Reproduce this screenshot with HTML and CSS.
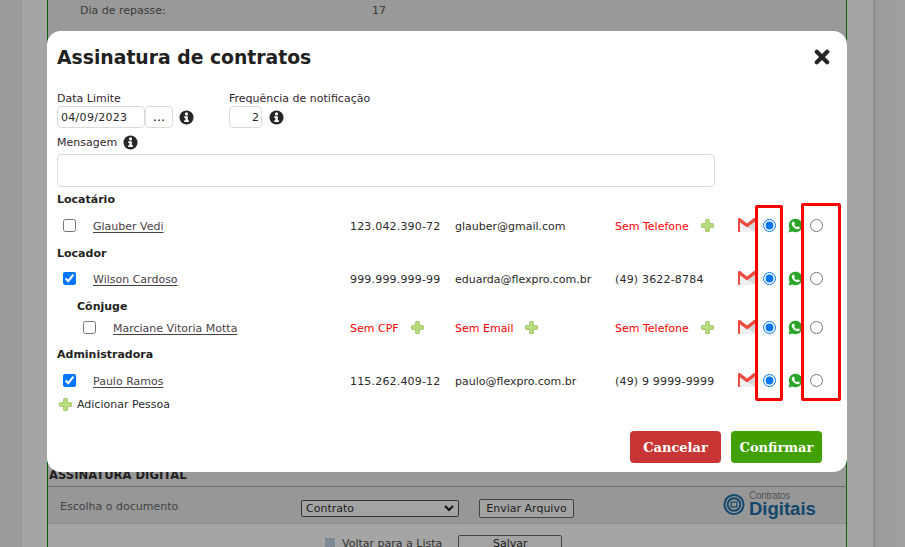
FILE: index.html
```html
<!DOCTYPE html>
<html lang="pt-BR">
<head>
<meta charset="utf-8">
<title>Assinatura de contratos</title>
<link rel="stylesheet" href="styles.css">
</head>
<body>
<svg class="defs" width="0" height="0" aria-hidden="true">
  <defs>
    <symbol id="i-info" viewBox="0 0 16 16">
      <circle cx="8" cy="8" r="7.5" fill="#262626"/>
      <circle cx="8" cy="4.2" r="1.7" fill="#fff"/>
      <path d="M5.6 6.6H9.4V11H10.6V12.8H5.6V11H6.8V8.4H5.6Z" fill="#fff"/>
    </symbol>
    <symbol id="i-plus" viewBox="0 0 14 14">
      <path d="M5 1.2Q5 .5 5.7 .5H8.3Q9 .5 9 1.2V5H12.8Q13.5 5 13.5 5.7V8.3Q13.5 9 12.8 9H9V12.8Q9 13.5 8.3 13.5H5.7Q5 13.5 5 12.8V9H1.2Q.5 9 .5 8.3V5.7Q.5 5 1.2 5H5Z" fill="#b9dc7c" stroke="#93bd55" stroke-width=".9"/>
    </symbol>
    <symbol id="i-gmail" viewBox="0 0 18 14">
      <path d="M0 1 9 8 18 1V14H0Z" fill="#eef0f2"/>
      <path d="M9 8.4 18 14V1Z" fill="#d3dade"/>
      <path d="M1 0H2L9 5.6 16 0H17Q18 0 18 1V2.8L9 9.4 2 4.2V14H1Q0 14 0 13V1Q0 0 1 0Z" fill="#ef4a3e"/>
    </symbol>
    <symbol id="i-wa" viewBox="0 0 16 16">
      <path d="M.6 15.4 1.7 11.4A7.2 7.2 0 1 1 4.6 14.3Z" fill="#2aa52a"/>
      <path d="M5.4 3.9 6.3 3.8 7.4 6.2 6.6 7.2Q7.4 9 9.4 9.9L10.4 8.8 12.6 9.9 12.4 11Q11.6 12.2 10 11.9 5 10.6 3.9 6.4 3.7 4.8 5.4 3.9Z" fill="#fff"/>
    </symbol>
  </defs>
</svg>

<div class="page">
  <div class="band band-a"></div>
  <div class="band band-b"></div>
  <main class="content">
    <div class="repasse">
      <span class="repasse-label">Dia de repasse:</span>
      <span>17</span>
    </div>
    <section class="digital">
      <h2 class="digital-title">ASSINATURA DIGITAL</h2>
      <div class="digital-row">
        <span class="digital-label">Escolha o documento</span>
        <span class="fake-select">Contrato<svg class="chev" width="10" height="7" viewBox="0 0 10 7"><path d="M1 1 5 5 9 1" fill="none" stroke="#111" stroke-width="2"/></svg></span>
        <span class="fake-btn send">Enviar Arquivo</span>
        <div class="logo">
          <svg class="logo-mark" width="22" height="23" viewBox="0 0 22 24">
            <circle cx="11" cy="12" r="10" fill="none" stroke="#13466b" stroke-width="2"/>
            <circle cx="11" cy="12" r="6.6" fill="none" stroke="#13466b" stroke-width="2"/>
            <path d="M8 9.5H14V14.5H8Z" fill="none" stroke="#13466b" stroke-width="1.3"/>
          </svg>
          <div class="logo-text">
            <span class="logo-small">Contratos</span>
            <span class="logo-big">Digitais</span>
          </div>
        </div>
      </div>
      <div class="digital-foot">
        <span class="list-ico"></span>
        <span class="back">Voltar para a Lista</span>
        <span class="fake-btn save">Salvar</span>
      </div>
    </section>
  </main>
  <div class="band band-c"></div>
  <div class="band band-d"></div>
</div>

<div class="modal">
  <header class="modal-head">
    <h1 class="modal-title">Assinatura de contratos</h1>
    <svg class="close" width="16" height="16" viewBox="0 0 16 16"><path d="M2.8 2.8 13.2 13.2M13.2 2.8 2.8 13.2" stroke="#262626" stroke-width="4.2" stroke-linecap="round"/></svg>
  </header>

  <div class="fields">
    <div class="field field-date">
      <label class="lbl">Data Limite</label>
      <div class="field-line">
        <span class="input date">04/09/2023</span>
        <span class="input dots">...</span>
        <svg class="info info-date"><use href="#i-info"/></svg>
      </div>
    </div>
    <div class="field">
      <label class="lbl">Frequência de notificação</label>
      <div class="field-line">
        <span class="input freq">2</span>
        <svg class="info info-freq"><use href="#i-info"/></svg>
      </div>
    </div>
  </div>

  <div class="msg-label"><span class="lbl">Mensagem</span><svg class="info"><use href="#i-info"/></svg></div>
  <div class="input message"></div>

  <h3 class="group g-first">Locatário</h3>
  <div class="person p-a">
    <input type="checkbox" class="chk">
    <a class="name">Glauber Vedi</a>
    <span class="cpf">123.042.390-72</span>
    <span class="mail">glauber@gmail.com</span>
    <span class="phone miss">Sem Telefone<svg class="plus"><use href="#i-plus"/></svg></span>
    <svg class="gmail"><use href="#i-gmail"/></svg>
    <input type="radio" class="radio r1" name="a1" checked>
    <svg class="wa"><use href="#i-wa"/></svg>
    <input type="radio" class="radio r2" name="a1">
  </div>

  <h3 class="group g-b">Locador</h3>
  <div class="person p-b">
    <input type="checkbox" class="chk" checked>
    <a class="name">Wilson Cardoso</a>
    <span class="cpf">999.999.999-99</span>
    <span class="mail">eduarda@flexpro.com.br</span>
    <span class="phone">(49) 3622-8784</span>
    <svg class="gmail"><use href="#i-gmail"/></svg>
    <input type="radio" class="radio r1" name="a2" checked>
    <svg class="wa"><use href="#i-wa"/></svg>
    <input type="radio" class="radio r2" name="a2">
  </div>

  <h3 class="group g-c">Cônjuge</h3>
  <div class="person p-c spouse">
    <input type="checkbox" class="chk">
    <a class="name">Marciane Vitoria Motta</a>
    <span class="cpf miss">Sem CPF<svg class="plus"><use href="#i-plus"/></svg></span>
    <span class="mail miss">Sem Email<svg class="plus"><use href="#i-plus"/></svg></span>
    <span class="phone miss">Sem Telefone<svg class="plus"><use href="#i-plus"/></svg></span>
    <svg class="gmail"><use href="#i-gmail"/></svg>
    <input type="radio" class="radio r1" name="a3" checked>
    <svg class="wa"><use href="#i-wa"/></svg>
    <input type="radio" class="radio r2" name="a3">
  </div>

  <h3 class="group g-d">Administradora</h3>
  <div class="person p-d">
    <input type="checkbox" class="chk" checked>
    <a class="name">Paulo Ramos</a>
    <span class="cpf">115.262.409-12</span>
    <span class="mail">paulo@flexpro.com.br</span>
    <span class="phone">(49) 9 9999-9999</span>
    <svg class="gmail"><use href="#i-gmail"/></svg>
    <input type="radio" class="radio r1" name="a4" checked>
    <svg class="wa"><use href="#i-wa"/></svg>
    <input type="radio" class="radio r2" name="a4">
  </div>

  <div class="add"><svg class="plus-add"><use href="#i-plus"/></svg>Adicionar Pessoa</div>

  <footer class="actions">
    <button class="btn cancel">Cancelar</button>
    <button class="btn ok">Confirmar</button>
  </footer>

  <div class="mark mark-1"></div>
  <div class="mark mark-2"></div>
</div>
</body>
</html>
```

FILE: styles.css
```css
* { box-sizing: border-box; }
html, body { margin: 0; padding: 0; height: 547px; overflow: hidden; }
body {
  position: relative;
  font-family: "DejaVu Sans", Verdana, sans-serif;
  font-size: 11px;
  color: #262626;
  background: #999;
}
.defs { position: absolute; }

/* Dimmed page behind the dialog */
.page { display: flex; height: 547px; }
.band { flex: none; height: 100%; }
.band-a { width: 22px; background: #9a9a9a; }
.band-b { width: 25px; background: #a5a5a5; }
.band-c { width: 26px; background: #a5a5a5; }
.band-d { flex: 1; background: linear-gradient(90deg, #8c8c8c, #9c9c9c 5px, #9f9f9f); }
.content {
  flex: none;
  width: 800px;
  height: 100%;
  overflow: hidden;
  background: #999;
  border-left: 1px solid #0c5c0c;
  border-right: 1px solid #0c5c0c;
}
.repasse { display: flex; padding: 4px 0 0 32px; height: 468px; color: #3a3a3a; }
.repasse-label { width: 292px; }
.digital-title {
  margin: 0 1px 0 0;
  padding-left: 1px;
  height: 19px;
  font-size: 11.6px;
  line-height: 15px;
  font-weight: 700;
  color: #1f1f1f;
  border-bottom: 1px solid #6d6d6d;
}
.digital-row {
  display: flex;
  align-items: center;
  height: 37px;
  padding: 6px 0 0 12px;
  background: #979797;
  border-bottom: 1px solid #8e8e8e;
}
.digital-label { width: 241px; margin-top: -4px; color: #444; }
.fake-select {
  display: flex;
  align-items: center;
  justify-content: space-between;
  width: 158px;
  height: 17px;
  padding: 0 4px;
  background: #a3a3a3;
  border: 1px solid #333;
  border-radius: 2px;
  color: #1c1c1c;
}
.fake-btn {
  display: flex;
  align-items: center;
  justify-content: center;
  background: #a3a3a3;
  border: 1px solid #444;
  border-radius: 2px;
  color: #1c1c1c;
}
.send { width: 95px; height: 19px; margin-left: 20px; }
.logo { display: flex; align-items: center; gap: 4px; margin: -7px 0 0 149px; }
.logo-text { display: flex; flex-direction: column; font-family: "Liberation Sans", sans-serif; color: #13466b; }
.logo-small { font-size: 10px; line-height: 9px; color: #555; letter-spacing: -.3px; }
.logo-big { font-size: 18.5px; line-height: 18px; font-weight: 700; }
.digital-foot {
  display: flex;
  align-items: flex-start;
  height: 24px;
  padding: 11px 0 0 277px;
  background: #a5a5a5;
  color: #333;
}
.list-ico { width: 10px; height: 11px; margin: 3px 7px 0 0; background: #7d8a96; }
.back { margin: 2px 16px 0 0; }
.save { width: 104px; height: 20px; padding-bottom: 4px; }

/* Dialog */
.modal {
  position: absolute;
  left: 47px;
  top: 31px;
  width: 800px;
  height: 441px;
  padding: 0 10px;
  background: #fff;
  border-radius: 14px;
}
.modal-head { display: flex; justify-content: space-between; align-items: center; height: 52px; padding-right: 7px; }
.modal-title { margin: 0; font-size: 18.8px; font-weight: 700; color: #212121; }
.close { flex: none; }
.lbl { display: block; line-height: 13px; color: #33262e; }
.fields { display: flex; height: 45px; padding-top: 9px; }
.field-date { width: 172px; }
.field-line { display: flex; align-items: center; margin-top: 1px; }
.input {
  display: block;
  background: #fff;
  border: 1px solid #dcdcdc;
  border-radius: 4px;
  color: #262626;
}
.date { width: 88px; height: 22px; line-height: 22px; padding-left: 3px; letter-spacing: .3px; }
.dots { width: 28px; height: 22px; line-height: 19px; text-align: center; font-size: 13px; color: #111; }
.freq { width: 33px; height: 22px; line-height: 22px; text-align: right; padding-right: 2px; }
.info { display: block; flex: none; width: 15px; height: 15px; }
.info-date { margin-left: 6px; }
.info-freq { margin-left: 7px; }
.msg-label { display: flex; align-items: center; gap: 6px; height: 16px; margin-top: 6px; }
.message { width: 658px; height: 33px; margin-top: 4px; }
.group { margin: 0; font-size: 11px; line-height: 14px; font-weight: 700; color: #231f20; }
.g-first { margin-top: 6px; }
.g-b { margin-top: 9px; }
.g-c { margin-top: 9px; padding-left: 20px; }
.g-d { margin-top: 8px; }

.person { display: grid; height: 26px; align-items: center;
  grid-template-columns: 36px 257px 105px 160px 123px 25px 25px 22px 20px;
}
.person.spouse { grid-template-columns: 56px 237px 105px 160px 123px 25px 25px 22px 20px; }
.p-a { margin-top: 5px; }
.p-b { margin-top: 4px; }
.p-c { margin-top: 0; }
.p-d { margin-top: 5px; }
.chk { margin: 0 0 0 6px; width: 13px; height: 13px; }
.spouse .chk { margin-left: 26px; }
.name { margin-top: 2px; color: #4a4148; text-decoration: underline; text-underline-offset: 2px; }
.cpf, .mail, .phone { display: flex; align-items: center; margin-top: 2px; color: #2a2a2a; white-space: nowrap; }
.cpf, .phone { letter-spacing: .18px; }
.cpf.miss, .mail.miss, .phone.miss { color: #f00; letter-spacing: 0; }
.plus { display: block; width: 13px; height: 13px; margin: -2px 0 0 12px; }
.gmail { display: block; width: 18px; height: 14px; }
.wa { display: block; width: 15px; height: 15px; }
.radio { margin: 0; width: 13px; height: 13px; }
.add { display: flex; align-items: center; height: 16px; margin-top: 3px; color: #2b2b2b; }
.plus-add { display: block; width: 13px; height: 13px; margin: 0 5px 0 2px; }
.actions { display: flex; justify-content: flex-end; gap: 10px; margin-top: 19px; padding-right: 15px; }
.btn {
  height: 32px;
  border: 0;
  border-radius: 4px;
  color: #fff;
  font-family: "DejaVu Serif", serif;
  font-size: 13px;
  font-weight: 700;
  padding: 0;
}
.cancel { width: 91px; background: #c73535; }
.ok { width: 91px; background: #41a000; }
.mark { position: absolute; border: 3px solid #f00; border-radius: 2px; }
.mark-1 { left: 708px; top: 174px; width: 28px; height: 196px; }
.mark-2 { left: 754px; top: 172px; width: 40px; height: 198px; }
```
